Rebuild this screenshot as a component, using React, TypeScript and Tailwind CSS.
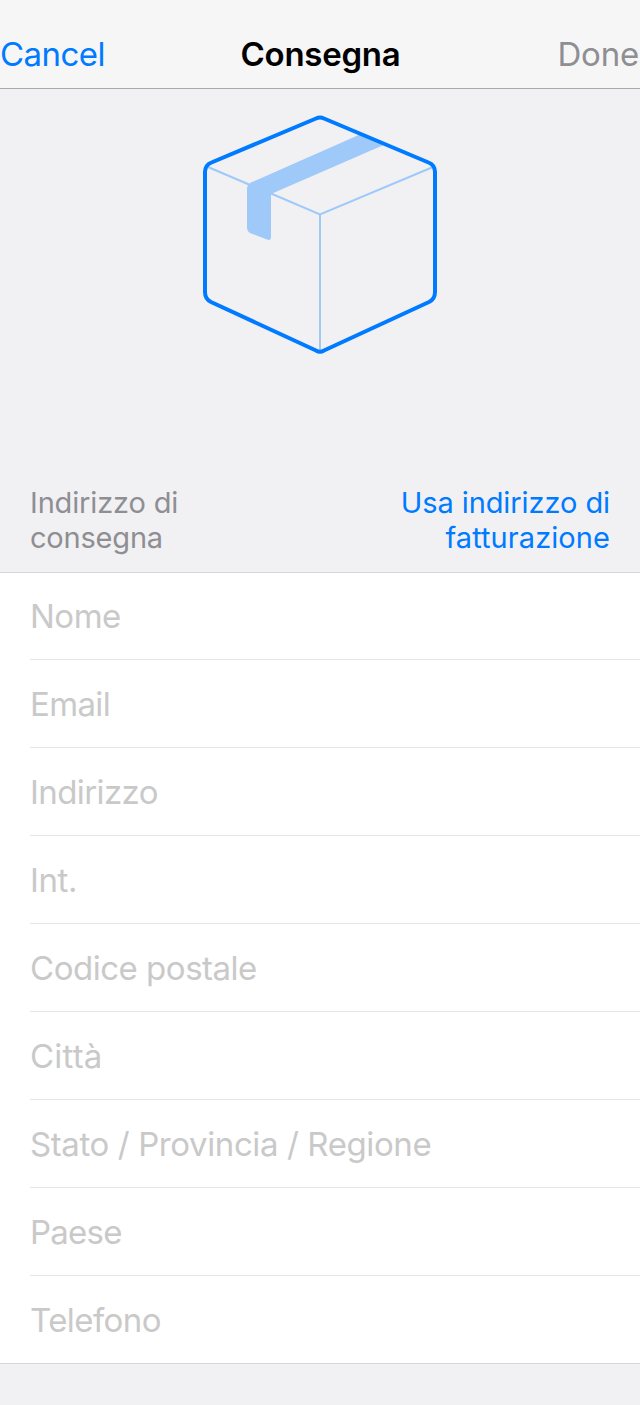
const fields: { label: string; spacing: string }[] = [
  { label: "Nome", spacing: "tracking-[-0.5px]" },
  { label: "Email", spacing: "tracking-[-0.65px]" },
  { label: "Indirizzo", spacing: "tracking-[-0.6px]" },
  { label: "Int.", spacing: "tracking-[-0.4px]" },
  { label: "Codice postale", spacing: "tracking-[-0.48px]" },
  { label: "Città", spacing: "tracking-[0.2px]" },
  { label: "Stato / Provincia / Regione", spacing: "tracking-[-0.4px]" },
  { label: "Paese", spacing: "tracking-[-0.75px]" },
  { label: "Telefono", spacing: "tracking-[-0.57px]" },
];

function PackageIcon() {
  return (
    <svg width="240" height="242" viewBox="200 114 240 242" fill="none" aria-hidden="true">
      <path d="M247 188Q247 185 250 183L361 134L386 144L271 194V237Q271 241 267 239.5L250 233Q247 231 247 228Z" fill="#9fc9f9" />
      <path d="M208 167L249 184.500M271 193.500L320 214.500L433 167M320 214.500V351" stroke="#9fc9f9" strokeWidth="2" />
      <path d="M316 118.500Q320 116.500 324 118.500L428.500 162.500Q435 165 435 172V292Q435 299 429 302L324 350.500Q320 353 316 350.500L211 302Q205 299 205 292V172Q205 165 211.500 162.500Z" stroke="#007aff" strokeWidth="4" strokeLinejoin="round" />
    </svg>
  );
}

export default function App() {
  return (
    <main className="flex h-[1405px] w-[640px] flex-col overflow-hidden bg-[#f1f1f4] font-['Inter',sans-serif]">
      <header className="grid h-[89px] shrink-0 grid-cols-3 items-start border-b border-[#a8a8aa] bg-[#f6f6f6] pt-[34px] text-[33px] leading-[40px]">
        <button className="text-left tracking-[-0.55px] text-[#007aff]">Cancel</button>
        <h1 className="pl-px text-center font-semibold tracking-[-0.25px] text-black">Consegna</h1>
        <button className="pr-px text-right tracking-[-0.2px] text-[#8e8e93]">Done</button>
      </header>
      <div className="flex h-[396px] shrink-0 justify-center pt-[25px]">
        <PackageIcon />
      </div>
      <div className="flex h-[87px] shrink-0 justify-between px-[30px] text-[29px] leading-[35px]">
        <p className="text-[#8e8e93]">
          <span className="block tracking-[-0.15px]">Indirizzo di</span>
          <span className="block tracking-[-0.2px]">consegna</span>
        </p>
        <button className="self-start text-right text-[#007aff]">
          <span className="block tracking-[-0.08px]">Usa indirizzo di</span>
          <span className="block tracking-[0.07px]">fatturazione</span>
        </button>
      </div>
      <form className="h-[792px] shrink-0 border-y border-[#d6d6d9] bg-white pl-[30px]">
        {fields.map(({ label, spacing }) => (
          <div key={label} className="flex h-[88px] items-center border-b border-[#e6e6e6] pt-px text-[33px] leading-[40px] text-[#c9c9c9] first:h-[87px] first:pt-0 last:h-[87px] last:border-0">
            <span className={spacing}>{label}</span>
          </div>
        ))}
      </form>
    </main>
  );
}
